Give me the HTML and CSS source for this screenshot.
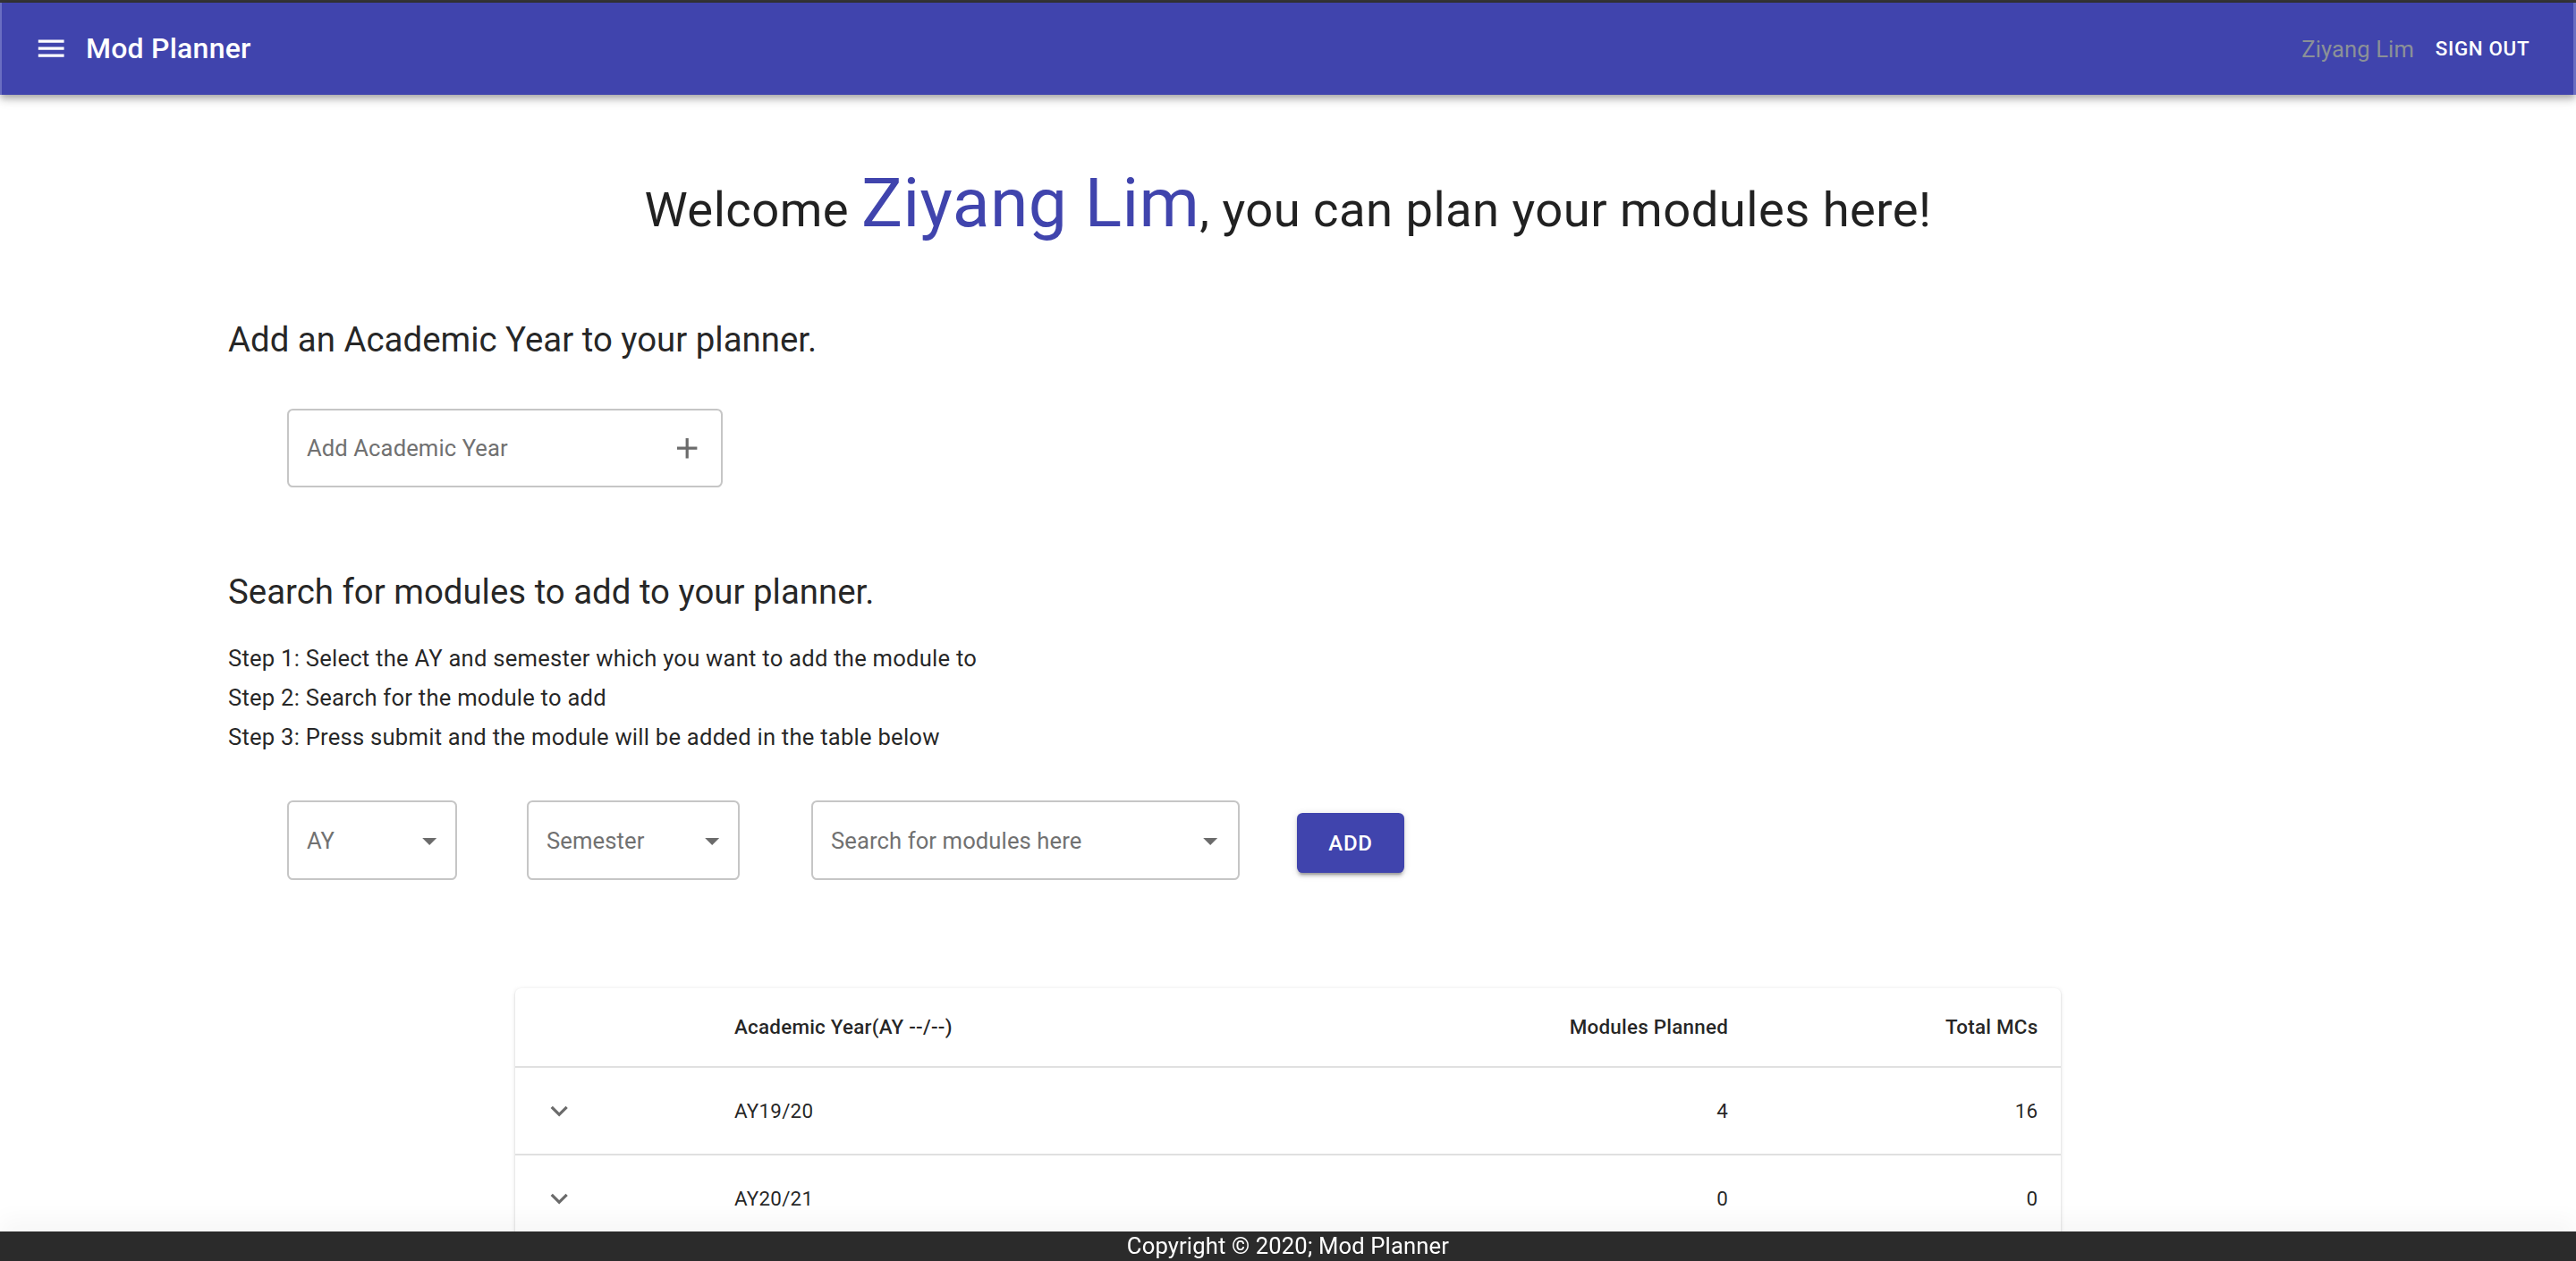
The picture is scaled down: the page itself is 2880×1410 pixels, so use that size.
FILE: index.html
```html
<!DOCTYPE html>
<html lang="en">
<head>
<meta charset="utf-8">
<title>Mod Planner</title>
<link rel="stylesheet" href="styles.css">
</head>
<body>
<div class="top-strip"></div>
<header class="appbar">
  <svg class="menu-icon" viewBox="0 0 24 24" aria-hidden="true"><path d="M3 18h18v-2H3v2zm0-5h18v-2H3v2zm0-7v2h18V6H3z"/></svg>
  <div class="brand">Mod Planner</div>
  <div class="user">Ziyang Lim</div>
  <button class="signout">Sign Out</button>
</header>

<main class="content">
  <h1 class="welcome">Welcome <span class="name">Ziyang Lim</span>, you can plan your modules here!</h1>

  <section class="section">
    <h2 class="section-title first">Add an Academic Year to your planner.</h2>
    <div class="field year-field">
      <span class="label">Add Academic Year</span>
      <svg class="plus-icon" viewBox="0 0 24 24" aria-hidden="true"><path d="M19 13h-6v6h-2v-6H5v-2h6V5h2v6h6v2z"/></svg>
    </div>
  </section>

  <section class="section">
    <h2 class="section-title second">Search for modules to add to your planner.</h2>
    <div class="steps">
      <p>Step 1: Select the AY and semester which you want to add the module to</p>
      <p>Step 2: Search for the module to add</p>
      <p>Step 3: Press submit and the module will be added in the table below</p>
    </div>
    <div class="controls">
      <div class="field select ay">
        <span class="label">AY</span>
        <svg class="drop-icon" viewBox="0 0 24 24" aria-hidden="true"><path d="M7 10l5 5 5-5z"/></svg>
      </div>
      <div class="field select sem">
        <span class="label">Semester</span>
        <svg class="drop-icon" viewBox="0 0 24 24" aria-hidden="true"><path d="M7 10l5 5 5-5z"/></svg>
      </div>
      <div class="field select search">
        <span class="label">Search for modules here</span>
        <svg class="drop-icon" viewBox="0 0 24 24" aria-hidden="true"><path d="M7 10l5 5 5-5z"/></svg>
      </div>
      <button class="add-btn">Add</button>
    </div>
  </section>

  <div class="table">
    <div class="row head">
      <div class="cell"></div>
      <div class="cell">Academic Year(AY --/--)</div>
      <div class="cell num">Modules Planned</div>
      <div class="cell num">Total MCs</div>
    </div>
    <div class="row body">
      <div class="cell"><svg class="chev" viewBox="0 0 24 24" aria-hidden="true"><path d="M7.41 8.59L12 13.17l4.59-4.58L18 10l-6 6-6-6 1.41-1.41z"/></svg></div>
      <div class="cell">AY19/20</div>
      <div class="cell num">4</div>
      <div class="cell num">16</div>
    </div>
    <div class="row body">
      <div class="cell"><svg class="chev" viewBox="0 0 24 24" aria-hidden="true"><path d="M7.41 8.59L12 13.17l4.59-4.58L18 10l-6 6-6-6 1.41-1.41z"/></svg></div>
      <div class="cell">AY20/21</div>
      <div class="cell num">0</div>
      <div class="cell num">0</div>
    </div>
  </div>
</main>

<footer class="footer">Copyright © 2020; Mod Planner</footer>
</body>
</html>
```

FILE: styles.css
```css
* { box-sizing: border-box; }

body {
  margin: 0;
  font-family: Roboto, "Noto Sans", "Liberation Sans", sans-serif;
  color: rgba(0, 0, 0, 0.87);
  background: #fff;
}

.top-strip {
  height: 3px;
  background: #353537;
}

.appbar {
  position: relative;
  z-index: 2;
  height: 103px;
  display: flex;
  align-items: center;
  padding: 0 36px 0 36.4px;
  background: #4044ad;
  border-left: 2px solid #6a6ec2;
  border-right: 3px solid #6a6ec2;
  color: #fff;
  box-shadow: 0 3.2px 6.4px -1.6px rgba(0,0,0,0.2), 0 6.4px 8px 0 rgba(0,0,0,0.14), 0 1.6px 16px 0 rgba(0,0,0,0.12);
}

.menu-icon {
  width: 38.4px;
  height: 38.4px;
  margin-right: 19.2px;
  fill: #fff;
  flex: none;
}

.brand {
  flex: 1;
  font-size: 32px;
  font-weight: 500;
  letter-spacing: 0.24px;
  line-height: 1.6;
}

.user {
  font-size: 25.6px;
  letter-spacing: 0.1px;
  color: #8b9197;
  margin-right: 11px;
}

.signout {
  background: none;
  border: 0;
  color: #fff;
  font-family: inherit;
  font-size: 22.4px;
  font-weight: 500;
  letter-spacing: 0.64px;
  text-transform: uppercase;
  padding: 9.6px 12.8px;
  line-height: 1.75;
}

.welcome {
  margin: 83.3px 0 0;
  text-align: center;
  font-size: 54.4px;
  font-weight: 400;
  line-height: 1;
  letter-spacing: 0.45px;
}

.welcome .name {
  font-size: 76.8px;
  letter-spacing: 0.4px;
  color: #4044ad;
}

.section {
  padding-left: 255px;
}

.section-title {
  margin: 0;
  font-size: 38.4px;
  font-weight: 400;
  line-height: 51.2px;
}

.section-title.first { margin-top: 88.2px; }
.section-title.second { margin-top: 90.6px; }

.field {
  display: flex;
  align-items: center;
  height: 88px;
  border: 2px solid #c6c6c6;
  border-radius: 6.4px;
  padding-left: 20px;
  background: #fff;
}

.field .label {
  flex: 1;
  font-size: 25.6px;
  letter-spacing: 0.1px;
  color: #717171;
  white-space: nowrap;
}

.year-field {
  width: 487px;
  margin: 51.5px 0 0 66px;
}

.plus-icon {
  width: 38.4px;
  height: 38.4px;
  margin-right: 18.6px;
  fill: #6b6b6b;
  flex: none;
}

.steps {
  margin-top: 27.2px;
}

.steps p {
  margin: 0;
  font-size: 25.6px;
  letter-spacing: 0.24px;
  line-height: 44px;
}

.controls {
  display: flex;
  align-items: flex-start;
  margin-top: 49.4px;
  padding-left: 66px;
}

.select {
  height: 89px;
}

.drop-icon {
  width: 38.4px;
  height: 38.4px;
  fill: #6b6b6b;
  flex: none;
  margin-right: 9.2px;
}

.ay { width: 190px; }
.sem { width: 238px; margin-left: 78px; }
.search { width: 479px; margin-left: 80px; }
.search .drop-icon { margin-right: 12px; }

.add-btn {
  margin: 14px 0 0 64px;
  width: 120px;
  height: 67px;
  border: 0;
  border-radius: 6.4px;
  background: #4044ad;
  color: #fff;
  font-family: inherit;
  font-size: 24px;
  font-weight: 500;
  letter-spacing: 0.7px;
  text-transform: uppercase;
  box-shadow: 0 4.8px 1.6px -3.2px rgba(0,0,0,0.2), 0 3.2px 3.2px 0 rgba(0,0,0,0.14), 0 1.6px 8px 0 rgba(0,0,0,0.12);
}

.table {
  width: 1728px;
  margin: 120.5px auto 0;
  border-radius: 6.4px;
  background: #fff;
  box-shadow: 0 3.2px 1.6px -1.6px rgba(0,0,0,0.2), 0 1.6px 1.6px 0 rgba(0,0,0,0.14), 0 1.6px 4.8px 0 rgba(0,0,0,0.12);
}

.row {
  display: grid;
  grid-template-columns: 219.4px 1fr 400px 346.4px;
  align-items: center;
  border-bottom: 2px solid #e0e0e0;
}

.row.head {
  height: 89px;
  font-weight: 500;
}

.row.body {
  height: 98px;
}

.cell {
  padding: 0 25.6px;
  font-size: 22.4px;
  letter-spacing: 0.24px;
  line-height: 1.43;
}

.num { text-align: right; }

.chev {
  display: block;
  width: 38.4px;
  height: 38.4px;
  margin-left: 4.8px;
  fill: #6b6b6b;
}

.footer {
  position: fixed;
  left: 0;
  right: 0;
  bottom: 0;
  height: 33px;
  background: #2b2b2b;
  color: #fff;
  text-align: center;
  font-size: 25.6px;
  letter-spacing: 0.15px;
  line-height: 33px;
  box-shadow: 0 -14px 26px rgba(0,0,0,0.035);
}
```
